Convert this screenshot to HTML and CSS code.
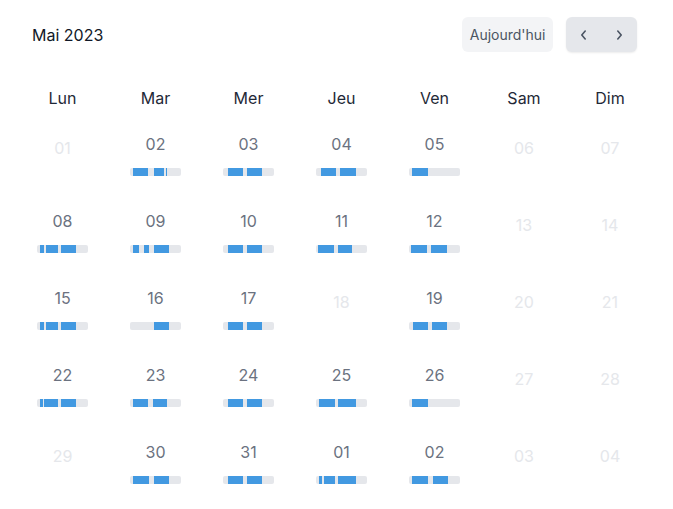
FILE: index.html
```html
<html>
	<head>
		<link rel="stylesheet" href="styles.css">
	</head>

	<body>

		<div class="Calendar">
			<div class="Header">
				<span class="Title">Mai 2023</span>
				<div class="Actions">
					<button class="Today">Aujourd'hui</button>
					<div class="Nav">
						<button><svg width="10" height="10" viewBox="0 0 10 10"><path d="M6.2 1 L2.8 5 L6.2 9"/></svg></button>
						<button><svg width="10" height="10" viewBox="0 0 10 10"><path d="M3.8 1 L7.2 5 L3.8 9"/></svg></button>
					</div>
				</div>
			</div>

			<div class="Grid" id="grid">
				<div class="DayName">Lun</div>
				<div class="DayName">Mar</div>
				<div class="DayName">Mer</div>
				<div class="DayName">Jeu</div>
				<div class="DayName">Ven</div>
				<div class="DayName">Sam</div>
				<div class="DayName">Dim</div>
			</div>
		</div>

		<script>
			// [day, segments] - segments are [start, end] in px on a 51px track, null = outside
			const days = [
				["01", null], ["02", [[3,18],[24,34],[36,37]]], ["03", [[5,20],[24,39]]], ["04", [[5,20],[24,40]]], ["05", [[3,19]]], ["06", null], ["07", null],
				["08", [[3,7],[9,21],[24,39]]], ["09", [[3,9],[14,19],[24,39]]], ["10", [[5,20],[24,39]]], ["11", [[2,18],[22,36]]], ["12", [[2,18],[22,38]]], ["13", null], ["14", null],
				["15", [[3,7],[9,21],[24,39]]], ["16", [[24,39]]], ["17", [[5,20],[24,39]]], ["18", null], ["19", [[4,19],[23,38]]], ["20", null], ["21", null],
				["22", [[3,6],[7,21],[24,39]]], ["23", [[3,18],[23,37]]], ["24", [[5,20],[24,39]]], ["25", [[3,19],[22,40]]], ["26", [[3,19]]], ["27", null], ["28", null],
				["29", null], ["30", [[3,19],[24,39]]], ["31", [[5,20],[24,39]]], ["01", [[3,6],[8,19],[22,40]]], ["02", [[3,19],[24,39]]], ["03", null], ["04", null]
			];

			const grid = document.getElementById("grid");

			days.forEach(([n, segs]) => {
				const cell = document.createElement("div");
				cell.className = segs ? "Day" : "Day Off";
				cell.innerHTML = `<span class="Num">${n}</span>`;
				if(segs) {
					const bar = document.createElement("div");
					bar.className = "Bar";
					segs.forEach(([a, b]) => {
						const s = document.createElement("span");
						s.className = "Seg";
						s.style.left = a + "px";
						s.style.width = (b - a) + "px";
						bar.appendChild(s);
					});
					cell.appendChild(bar);
				}
				grid.appendChild(cell);
			});
		</script>

	</body>
</html>
```

FILE: styles.css
```css
body{
	margin: 0;
	background: #fff;
	font-family: Inter, "Noto Sans", sans-serif;
}
.Calendar{
	width: 637px;
	padding: 17px 0 0 16px;
}
.Header{
	display: flex;
	justify-content: space-between;
	align-items: center;
	padding: 0 16px;
}
.Title{
	font-size: 16px;
	font-weight: 400;
	color: #111827;
}
.Actions{
	display: flex;
	gap: 13px;
}
.Today{
	height: 35px;
	padding: 0 7.5px;
	border: 0;
	border-radius: 6px;
	background-color: #f3f4f6;
	color: #4b5563;
	font-family: Inter, sans-serif;
	font-size: 14px;
}
.Nav{
	display: flex;
	background-color: #e5e7eb;
	border-radius: 6px;
	box-shadow: 0 1px 2px rgba(0,0,0,0.08);
}
.Nav button{
	width: 35.5px;
	height: 35px;
	padding: 0;
	border: 0;
	background: none;
	display: flex;
	align-items: center;
	justify-content: center;
}
.Nav svg path{
	fill: none;
	stroke: #4b5563;
	stroke-width: 1.6;
	stroke-linecap: round;
	stroke-linejoin: round;
}
.Grid{
	display: grid;
	grid-template-columns: repeat(5, 93px) repeat(2, 86px);
	margin-top: 36px;
}
.DayName{
	text-align: center;
	font-size: 16px;
	line-height: 20px;
	color: #1f2937;
	padding-bottom: 12px;
}
.Day{
	height: 77px;
	box-sizing: border-box;
	padding-top: 12px;
	display: flex;
	flex-direction: column;
	align-items: center;
}
.Num{
	font-size: 16px;
	line-height: 24px;
	color: #6b7280;
}
.Day.Off .Num{
	color: #e5e7eb;
	margin-top: 4px;
}
.Bar{
	position: relative;
	width: 51px;
	height: 8px;
	margin-top: 12px;
	background-color: #e5e7eb;
	border-radius: 2px;
	overflow: hidden;
}
.Seg{
	position: absolute;
	top: 0;
	bottom: 0;
	background-color: #4299e1;
}
```
